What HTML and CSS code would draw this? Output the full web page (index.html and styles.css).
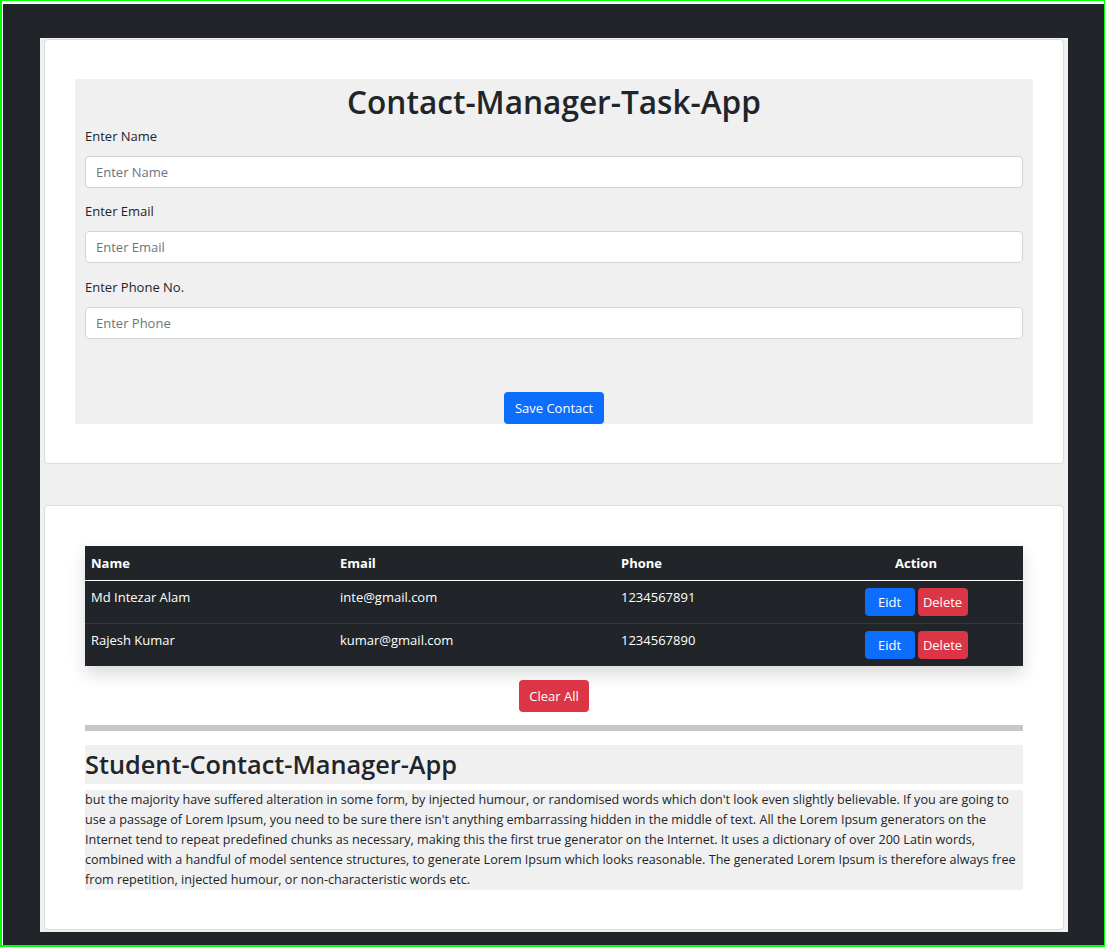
FILE: index.html
```html
<!DOCTYPE html>
<html lang="en">
<head>
<meta charset="utf-8">
<title>Contact-Manager-Task-App</title>
<link rel="stylesheet" href="styles.css">
</head>
<body>
<div class="frame">
  <div class="dark">
    <main class="container">
      <section class="card">
        <div class="form-box">
          <h1 class="title">Contact-Manager-Task-App</h1>
          <div class="field">
            <label class="label">Enter Name</label>
            <input class="input" type="text" placeholder="Enter Name">
          </div>
          <div class="field">
            <label class="label">Enter Email</label>
            <input class="input" type="text" placeholder="Enter Email">
          </div>
          <div class="field field-last">
            <label class="label">Enter Phone No.</label>
            <input class="input" type="text" placeholder="Enter Phone">
          </div>
          <div class="actions">
            <button class="btn btn-primary btn-save">Save Contact</button>
          </div>
        </div>
      </section>

      <section class="card card-list">
        <table class="table">
          <thead>
            <tr>
              <th class="c-name">Name</th>
              <th class="c-email">Email</th>
              <th class="c-phone">Phone</th>
              <th class="c-action">Action</th>
            </tr>
          </thead>
          <tbody>
            <tr>
              <td>Md Intezar Alam</td>
              <td>inte@gmail.com</td>
              <td>1234567891</td>
              <td class="c-action"><button class="btn btn-primary btn-row">Eidt</button><button class="btn btn-danger btn-row">Delete</button></td>
            </tr>
            <tr>
              <td>Rajesh Kumar</td>
              <td>kumar@gmail.com</td>
              <td>1234567890</td>
              <td class="c-action"><button class="btn btn-primary btn-row">Eidt</button><button class="btn btn-danger btn-row">Delete</button></td>
            </tr>
          </tbody>
        </table>
        <div class="clear-row">
          <button class="btn btn-danger btn-clear">Clear All</button>
        </div>
        <hr class="rule">
        <h2 class="subtitle">Student-Contact-Manager-App</h2>
        <p class="text">but the majority have suffered alteration in some form, by injected humour, or randomised words which don't look even slightly believable. If you are going to use a passage of Lorem Ipsum, you need to be sure there isn't anything embarrassing hidden in the middle of text. All the Lorem Ipsum generators on the Internet tend to repeat predefined chunks as necessary, making this the first true generator on the Internet. It uses a dictionary of over 200 Latin words, combined with a handful of model sentence structures, to generate Lorem Ipsum which looks reasonable. The generated Lorem Ipsum is therefore always free from repetition, injected humour, or non-characteristic words etc.</p>
      </section>
    </main>
  </div>
</div>
</body>
</html>
```

FILE: styles.css
```css
* { box-sizing: border-box; }
html, body { margin: 0; padding: 0; background: #fff; }
body {
  font-family: "Open Sans", "Noto Sans", sans-serif;
  font-size: 13px;
  color: #212529;
}
.frame {
  width: 1105px;
  height: 947px;
  border-style: solid;
  border-color: #00ff00;
  border-width: 1px 1px 2px 2px;
  padding: 3px 0 0 1px;
  background: #fff;
}
.dark {
  height: 941px;
  background: #212529;
  padding: 34px 36px 13px 37px;
}
.container {
  height: 100%;
  background: #f0f0f0;
  padding: 1px 4px 0 4px;
  display: flex;
  flex-direction: column;
  gap: 41px;
}
.card {
  background: #fff;
  border: 1px solid #dcdcdc;
  border-radius: 4px;
  padding: 39px 30px;
}
.form-box {
  background: #f0f0f0;
  padding: 0 10px;
}
.title {
  margin: 0;
  font-size: 31.6px;
  font-weight: 600;
  line-height: 46px;
  text-align: center;
}
.field { display: flex; flex-direction: column; }
.field + .field { margin-top: 12px; }
.field.field-last { margin-top: 13px; }
.label {
  display: block;
  height: 22px;
  line-height: 22px;
  margin-bottom: 9px;
}
.input {
  height: 32px;
  border: 1px solid #ced4da;
  border-radius: 4px;
  padding: 0 10px;
  font: inherit;
  color: #212529;
  background: #fff;
}
.input::placeholder { color: #6c757d; }
.actions {
  display: flex;
  justify-content: center;
  padding-top: 53px;
}
.btn {
  font: inherit;
  border: 0;
  border-radius: 4px;
  color: #fff;
  cursor: pointer;
}
.btn-primary { background: #0d6efd; }
.btn-danger { background: #dc3545; }
.btn-save { height: 32px; padding: 0 11px; }
.card-list { padding: 40px 40px 39px; }
.table {
  width: 100%;
  border-collapse: collapse;
  background: #212529;
  color: #fff;
  box-shadow: 0 8px 16px rgba(0,0,0,.15);
}
.table th {
  text-align: left;
  font-weight: 700;
  height: 34px;
  padding: 0 6px;
  border-bottom: 1px solid #fff;
}
.table td {
  vertical-align: top;
  padding: 7px 6px 0;
  height: 43px;
  border-bottom: 1px solid #373b3e;
}
.table tr:last-child td { border-bottom: 0; }
.c-name { width: 249px; }
.c-email { width: 281px; }
.c-phone { width: 194px; }
.table .c-action { width: 214px; text-align: center; vertical-align: middle; padding-top: 0; }
.btn-row { width: 50px; height: 28px; padding: 0; }
.btn-row + .btn-row { margin-left: 3px; }
.clear-row {
  display: flex;
  justify-content: center;
  padding-top: 14px;
}
.btn-clear { height: 32px; padding: 0 10px; }
.rule {
  margin: 13px 0 0;
  border: 0;
  height: 6px;
  background: #c6c7c9;
}
.subtitle {
  margin: 14px 0 0;
  background: #f0f0f0;
  font-size: 25.3px;
  font-weight: 600;
  line-height: 39px;
  height: 39px;
}
.text {
  margin: 6px 0 0;
  background: #f0f0f0;
  font-size: 12.6px;
  line-height: 20px;
}
```
